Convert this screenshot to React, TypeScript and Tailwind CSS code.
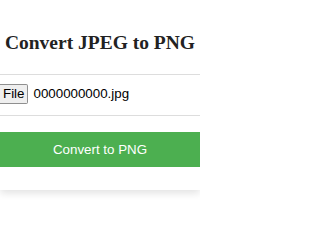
const App = () => {
  return (
    <main className="h-[200px] w-[200px] overflow-hidden bg-white">
      <div className="bg-white pb-[23px] pt-[32px] shadow-[0_3px_8px_rgba(0,0,0,0.12)]">
        {/* Title */}
        <h1 className="text-center font-['Liberation_Serif',serif] text-[19.5px] font-bold leading-[22px] text-[#222]">
          Convert JPEG to PNG
        </h1>

        <hr className="mt-[20px] border-t border-[#dddddd]" />

        {/* File picker */}
        <div className="flex items-center gap-[5px] pb-[11px] pt-[9px] font-['Liberation_Sans',sans-serif] text-[13.33px]">
          <span className="flex h-[20px] items-center rounded-r-[2px] border border-l-0 border-[#8f8f8f] bg-[#efefef] pl-[3px] pr-[3px] text-black">
            File
          </span>
          <span className="text-black">0000000000.jpg</span>
        </div>

        <hr className="border-t border-[#dddddd]" />

        {/* Submit */}
        <button
          type="button"
          className="mt-[16px] flex h-[35px] w-full items-center justify-center bg-[#4caf50] font-['Liberation_Sans',sans-serif] text-[13.33px] text-white"
        >
          Convert to PNG
        </button>
      </div>
    </main>
  );
};

export default App;
